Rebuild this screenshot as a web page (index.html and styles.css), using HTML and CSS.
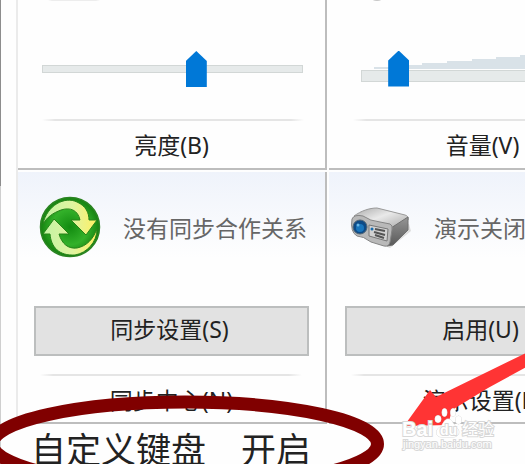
FILE: index.html
```html
<!DOCTYPE html>
<html lang="zh-CN">
<head>
<meta charset="utf-8">
<title>移动中心</title>
<link rel="stylesheet" href="styles.css">
</head>
<body>
<main class="center">
  <div class="tiles">
    <section class="tile">
      <svg class="peek" viewBox="0 0 62 3"><path d="M6 0H58L54 1H10Z" fill="#ededed"/></svg>
      <input class="slider" id="brightness" type="range" min="0" max="100" value="60">
      <hr class="rule">
      <label class="caption" for="brightness">亮度(B)</label>
    </section>
    <section class="tile">
      <svg class="peek" viewBox="0 0 62 3"><ellipse cx="24" cy="-2" rx="6" ry="3" fill="#c8c8c8"/></svg>
      <div class="volume">
        <svg class="wedge" viewBox="0 0 261 30" preserveAspectRatio="none"><path d="M13 30V28H37V26H61V24H86V22H111V20H135V18H159V16H184V14H208V12H232V10H256V30Z" fill="#d9e2e8"/></svg>
        <input class="slider slider-volume" id="volume" type="range" min="0" max="100" value="11">
      </div>
      <hr class="rule">
      <label class="caption" for="volume">音量(V)</label>
    </section>
    <section class="tile tile-shaded">
      <div class="status">
        <svg class="icon" viewBox="0 0 62 62">
          <defs>
            <radialGradient id="disc"><stop offset="0" stop-color="#128b10"/><stop offset=".6" stop-color="#33b12a"/><stop offset="1" stop-color="#15810f"/></radialGradient>
            <linearGradient id="upper"><stop offset="0" stop-color="#c3f4a4"/><stop offset=".55" stop-color="#e0f4a0"/><stop offset="1" stop-color="#fff063"/></linearGradient>
          </defs>
          <circle cx="31" cy="31" r="29.5" fill="url(#disc)" stroke="#2b8422" stroke-width="1.5"/>
          <path d="M4 28C8 9 26 0 38 6C47 10 50 17 50 24H58L47 39L32 24H41C39 14 31 11 22 14C14 17 8 21 4 28Z" fill="url(#upper)" stroke="#268319" stroke-width="1"/>
          <path d="M4 38L15 23L30 38H20C23 48 29 53 38 52C48 50 54 43 58 33C58 46 48 57 36 59C20 60 12 51 11 38Z" fill="url(#upper)" stroke="#268319" stroke-width="1"/>
        </svg>
        <span class="status-text">没有同步合作关系</span>
      </div>
      <button class="action" type="button">同步设置(S)</button>
      <hr class="rule">
      <div class="caption">同步中心(N)</div>
    </section>
    <section class="tile tile-shaded">
      <div class="status">
        <svg class="icon" viewBox="0 0 62 62">
          <defs>
            <linearGradient id="top" x2="1" y2="1"><stop offset="0" stop-color="#aaa"/><stop offset=".45" stop-color="#e9e9e9"/><stop offset="1" stop-color="#a4a4a4"/></linearGradient>
            <linearGradient id="side" x2="0" y2="1"><stop offset="0" stop-color="#969696"/><stop offset="1" stop-color="#595959"/></linearGradient>
          </defs>
          <path d="M4 38L40 52L61 35L59 28Z" fill="#ddd"/>
          <path d="M4 20C11 15 19 12 27 12L55 19Q59 20 58 24L42 33L14 25Z" fill="url(#top)" stroke="#999" stroke-width="1"/>
          <path d="M41 32L58 21L58 34L43 49L37 50Z" fill="url(#side)" stroke="#707070" stroke-width="1"/>
          <path d="M2 23Q4 18 13 20Q20 25 30 26L40 28Q43 29 42 34L40 46Q39 51 34 50L21 46Q13 40 7 40Q0 36 2 23Z" fill="#b9b9b9" stroke="#858585" stroke-width="1"/>
          <path d="M19 29L38 33L37 45L19 40Z" fill="#d2d2d2" stroke="#777" stroke-width="1"/>
          <path d="M25 33L35 35M24 36L35 39M25 39L34 42" stroke="#555" stroke-width="2"/>
          <circle cx="22" cy="33" r="1.5" fill="#186cae"/>
          <circle cx="10" cy="31" r="7" fill="#0e4b87" stroke="#536675" stroke-width="1"/>
          <circle cx="10" cy="32" r="4" fill="#1976bd"/><circle cx="8" cy="29" r="1.5" fill="#67b7e8"/>
        </svg>
        <span class="status-text">演示关闭</span>
      </div>
      <button class="action" type="button">启用(U)</button>
      <hr class="rule">
      <div class="caption">演示设置(P)</div>
    </section>
  </div>
  <p class="note">自定义键盘　开启</p>
  <svg class="markup" width="525" height="464" viewBox="0 0 525 464">
    <ellipse cx="185" cy="444" rx="192.500" ry="42" fill="none" stroke="#800000" stroke-width="13"/>
    <path d="M404 426L430 390L436 397L530 351V365L488 388L452 410L448 425Z" fill="#ff3434"/>
    <g class="brand">
      <text x="402" y="436" class="brand-name">Bai</text>
      <g class="paw">
        <ellipse cx="438" cy="419" rx="3" ry="3.5"/>
        <ellipse cx="444.500" cy="412.500" rx="2.5" ry="4"/>
        <ellipse cx="453" cy="412.500" rx="2.5" ry="4"/>
        <ellipse cx="458.500" cy="420" rx="3" ry="4"/>
        <path d="M448 419C452 419 453 424 456 427C461 431 459 437 453 437H442C435 437 435 430 440 427C443 425 444 419 448 419Z"/>
      </g>
      <text x="440" y="435" class="brand-du">du</text>
      <text x="462" y="435" class="brand-cjk">经验</text>
      <text x="403" y="448" class="brand-url">jingyan.baidu.com</text>
    </g>
  </svg>
</main>
</body>
</html>
```
FILE: styles.css
```css
* {
  box-sizing: border-box;
}

body {
  margin: 0;
  background: #fefefe;
  color: #222;
  font-family: "Noto Sans", "Noto Sans CJK SC", sans-serif;
  font-size: 23px;
}

.center {
  position: relative;
  height: 100vh;
  overflow: hidden;
  padding-left: 16px;
  background: linear-gradient(#8d8d8d 186px, #cfcfcf 186px) left / 1px 100% no-repeat;
}

.tiles {
  display: grid;
  grid-template-columns: 309px 309px;
  grid-template-rows: 170px 252px;
  gap: 2px;
  width: max-content;
  border-left: 2px solid #ebebeb;
}

.tile {
  display: flex;
  flex-direction: column;
  border-right: 2px solid #bdbdbd;
  border-bottom: 2px solid #bdbdbd;
  padding: 0 22px 0 24px;
  background: #fefefe;
}

.tile-shaded {
  padding: 0 16px;
  background: linear-gradient(#eff3fb, #fefefe 86px);
}

.peek {
  width: 62px;
  height: 3px;
  margin-bottom: 48px;
}

.slider {
  appearance: none;
  display: block;
  width: 100%;
  height: 36px;
  margin: 0;
  background: none;
}

.slider::-webkit-slider-runnable-track {
  height: 8px;
  border: 1px solid #d2d7d6;
  background: #e6eaea;
}

.slider::-webkit-slider-thumb {
  appearance: none;
  width: 21px;
  height: 36px;
  margin-top: -15px;
  background: #0078d7;
  clip-path: polygon(50% 0, 100% 28%, 100% 100%, 0 100%, 0 28%);
}

.volume {
  position: relative;
  margin: 0 -2px 0 8px;
  width: 261px;
}

.wedge {
  position: absolute;
  left: 0;
  bottom: 18px;
  width: 100%;
  height: 30px;
}

.slider-volume {
  position: relative;
  padding-top: 13px;
}

.slider-volume::-webkit-slider-runnable-track {
  height: 12px;
}

.slider-volume::-webkit-slider-thumb {
  margin-top: -20px;
}

.rule {
  width: 262px;
  height: 2px;
  margin: 32px 0 0;
  border: 0;
  background: linear-gradient(90deg, transparent, #e5e5e5 5%, #e5e5e5 95%, transparent);
}

.caption {
  padding: 8px 2px 0 0;
  line-height: 32px;
  text-align: center;
}

.tile-shaded .caption {
  padding-right: 0;
}

.status {
  display: flex;
  align-items: center;
  gap: 22px;
  height: 62px;
  margin: 24px 0 0 5px;
  white-space: nowrap;
}

.icon {
  flex: none;
  width: 62px;
  height: 62px;
}

.status-text {
  color: #666;
}

.action {
  flex: none;
  width: 275px;
  height: 50px;
  margin-top: 48px;
  padding: 0 4px 4px 0;
  border: 2px solid #bcbebe;
  background: #e2e2e2;
  color: #222;
  font: inherit;
  line-height: 32px;
}

.tile-shaded .rule {
  margin: 18px 0 0 6px;
}

.note {
  margin: 0 0 0 15px;
  font-size: 35px;
  line-height: 52px;
  white-space: nowrap;
}

.markup {
  position: absolute;
  top: 0;
  left: 0;
  pointer-events: none;
}

.brand {
  fill: #fff;
  stroke: #d8d8d8;
  stroke-width: 2px;
  paint-order: stroke;
  font-family: "Liberation Sans", "Noto Sans CJK SC", sans-serif;
}

.paw {
  stroke-width: 1px;
}

.brand-name {
  font-size: 20px;
  font-weight: bold;
}

.brand-du {
  font-size: 14px;
  font-weight: bold;
}

.brand-cjk {
  font-size: 16px;
}

.brand-url {
  font-size: 11px;
}
```
